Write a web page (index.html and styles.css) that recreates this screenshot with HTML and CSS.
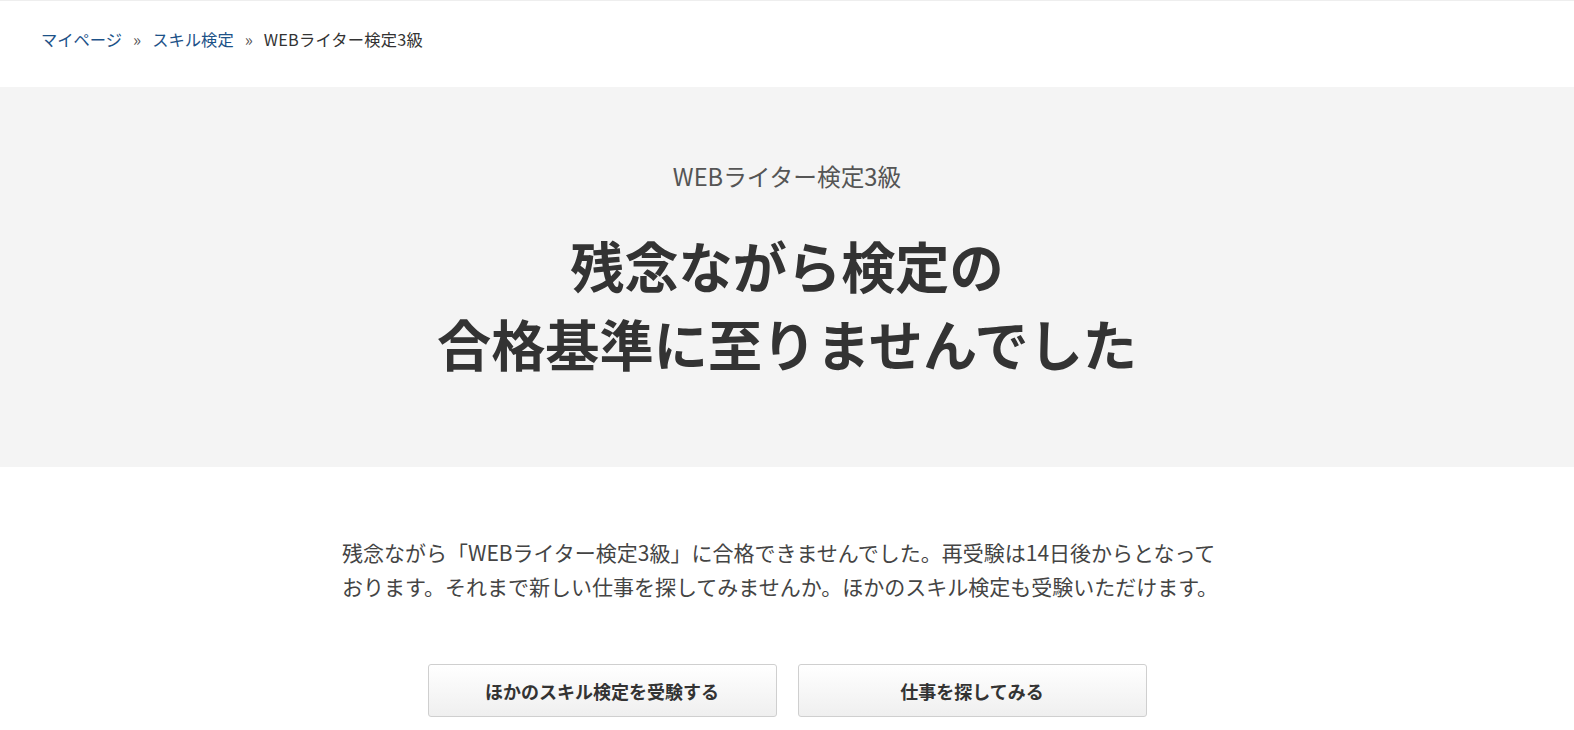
FILE: index.html
```html
<!DOCTYPE html>
<html lang="ja">
<head>
<meta charset="utf-8">
<title>WEBライター検定3級</title>
<link rel="stylesheet" href="styles.css">
</head>
<body>
<header class="topbar">
  <nav class="breadcrumb">
    <a href="#" class="crumb-link">マイページ</a>
    <span class="sep">»</span>
    <a href="#" class="crumb-link">スキル検定</a>
    <span class="sep">»</span>
    <span class="crumb-current">WEBライター検定3級</span>
  </nav>
</header>
<section class="result-band">
  <p class="exam-name">WEBライター検定3級</p>
  <h1 class="result-title">残念ながら検定の<br>合格基準に至りませんでした</h1>
</section>
<main class="content">
  <p class="message">残念ながら「WEBライター検定3級」に合格できませんでした。再受験は14日後からとなって<br>おります。それまで新しい仕事を探してみませんか。ほかのスキル検定も受験いただけます。</p>
  <div class="actions">
    <a href="#" class="btn">ほかのスキル検定を受験する</a>
    <a href="#" class="btn">仕事を探してみる</a>
  </div>
</main>
</body>
</html>
```
FILE: styles.css
```css
html, body {
  margin: 0;
  padding: 0;
  background: #fff;
}
body {
  font-family: "Noto Sans CJK JP", "Noto Sans", sans-serif;
  color: #333;
}
.topbar {
  border-top: 1px solid #eeeeee;
  height: 87px;
  box-sizing: border-box;
  padding: 26px 0 0 41px;
}
.breadcrumb {
  font-size: 16.3px;
  line-height: 24px;
  display: flex;
  align-items: center;
}
.crumb-link {
  color: #1d5288;
  text-decoration: none;
}
.sep {
  color: #555;
  margin: 0 11px;
  font-size: 17px;
}
.crumb-current {
  color: #333;
  letter-spacing: 0.2px;
}
.result-band {
  background: #f4f4f4;
  height: 380px;
  box-sizing: border-box;
  padding-top: 71px;
  text-align: center;
}
.exam-name {
  margin: 0;
  font-size: 23.7px;
  line-height: 36px;
  color: #555;
}
.result-title {
  margin: 32px 0 0;
  font-size: 54.2px;
  line-height: 78px;
  font-weight: 700;
  color: #333;
}
.content {
  padding-top: 68px;
}
.message {
  width: 890px;
  margin: 0 auto;
  font-size: 21px;
  line-height: 34px;
  color: #444;
  white-space: nowrap;
}
.actions {
  margin-top: 61px;
  display: flex;
  justify-content: center;
  gap: 21px;
}
.btn {
  width: 349px;
  height: 53px;
  box-sizing: border-box;
  display: flex;
  align-items: center;
  justify-content: center;
  border: 1px solid #cfcfcf;
  border-radius: 3px;
  background: linear-gradient(#ffffff, #efefef);
  color: #333;
  font-weight: 700;
  font-size: 18px;
  text-decoration: none;
}
```
